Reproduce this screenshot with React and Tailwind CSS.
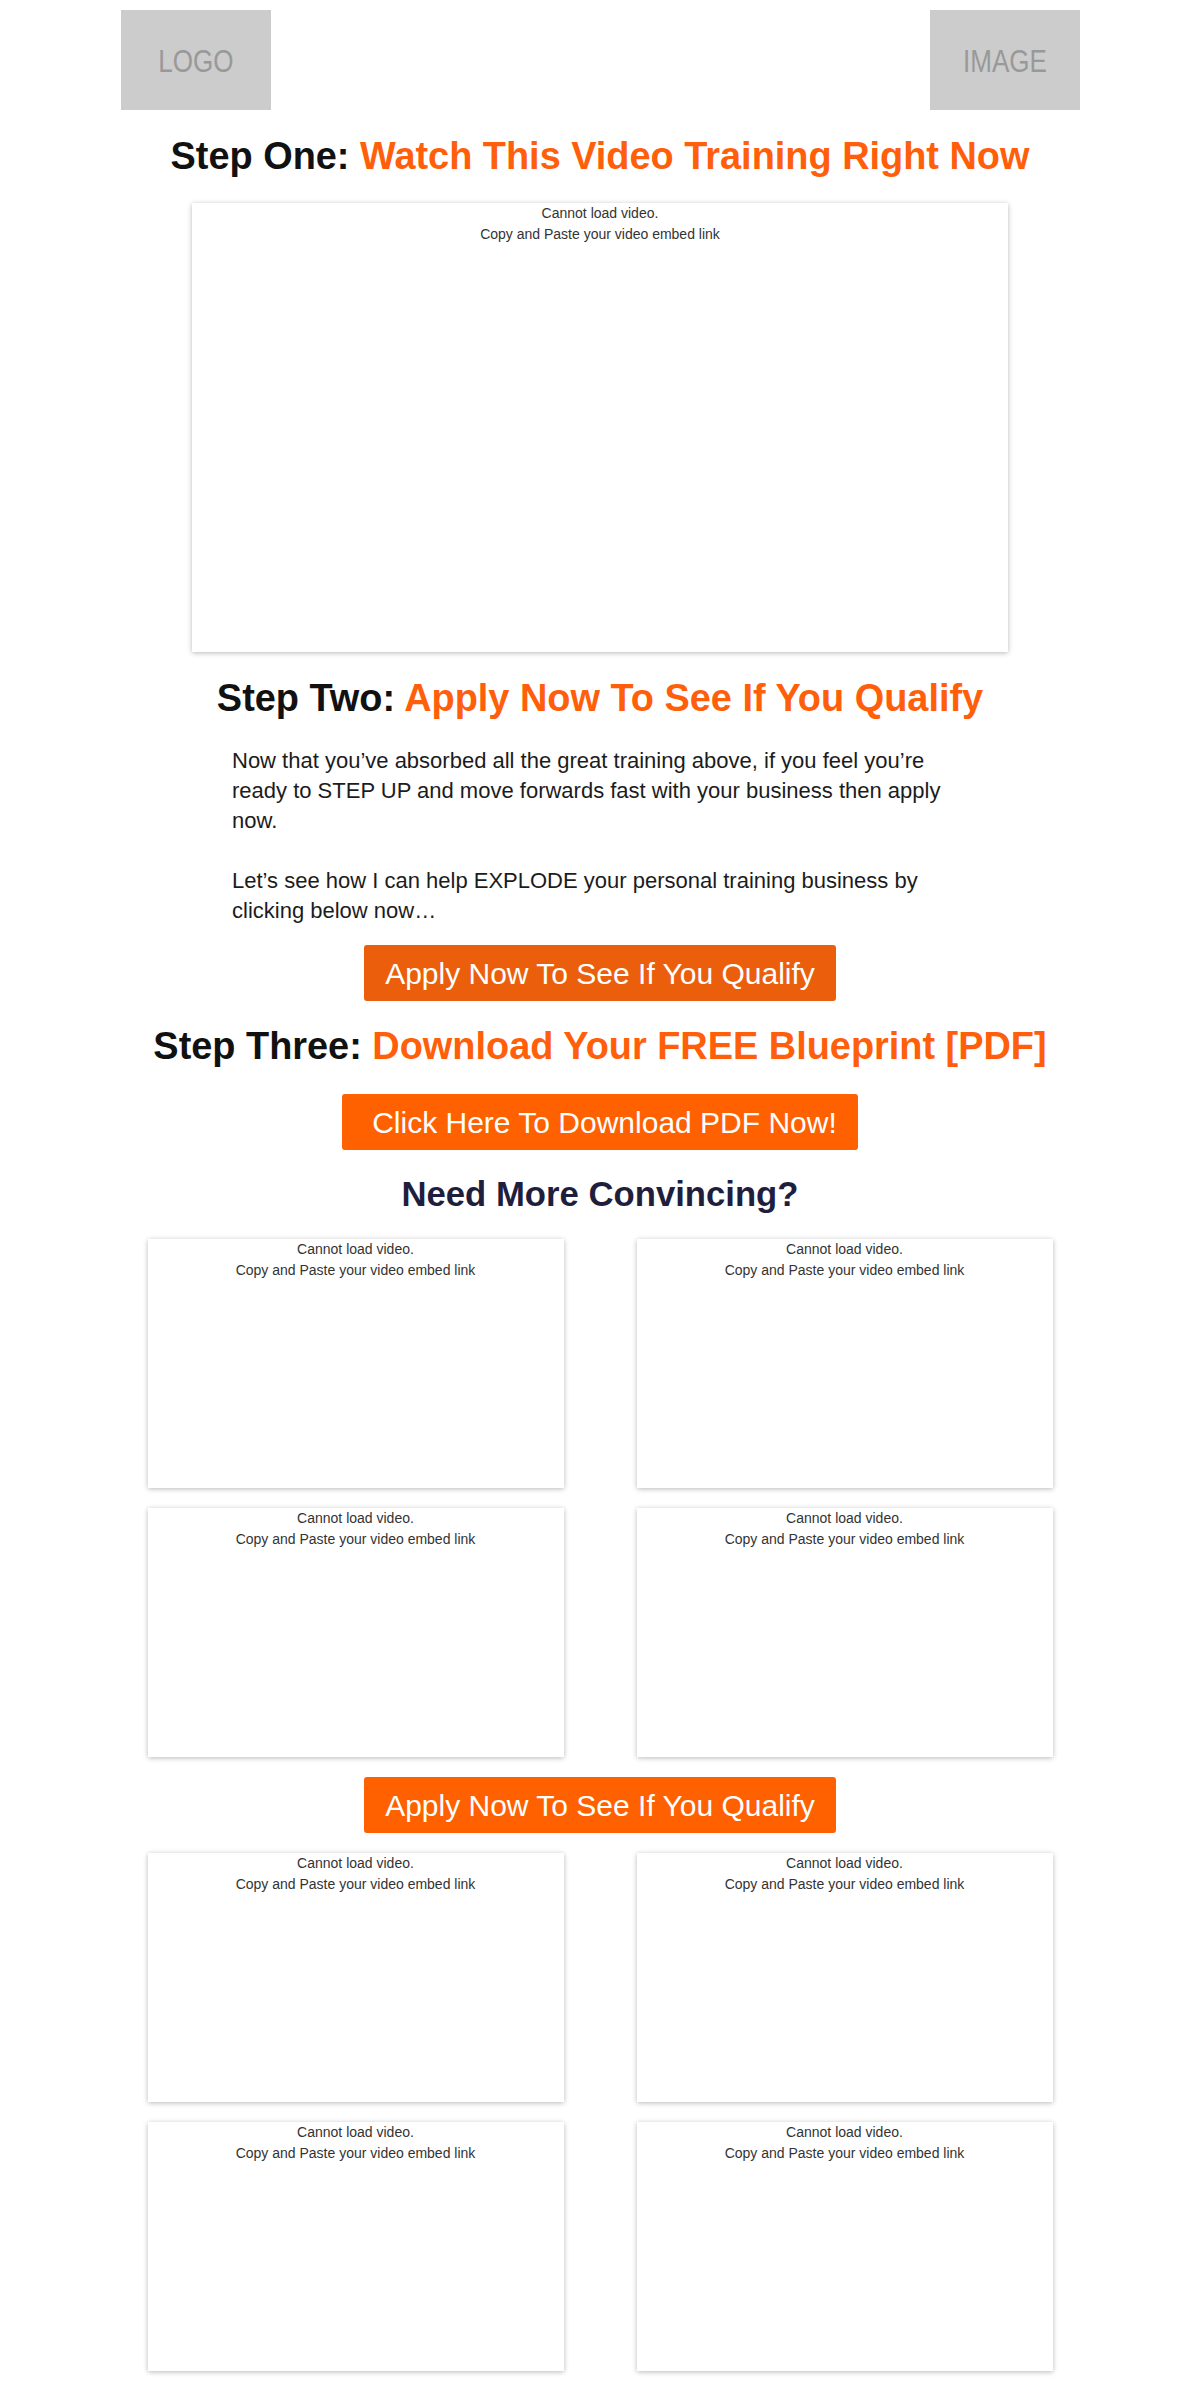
import React from "react";

function Video({ big }) {
  return (
    <div
      className={
        (big ? "w-[816px] h-[449px] mx-auto " : "w-[416px] h-[249px] ") +
        "bg-white shadow-[0_1px_5px_rgba(0,0,0,0.28)] text-center text-[14px] leading-[21px] text-[#333]"
      }
    >
      <div>Cannot load video.</div>
      <div>Copy and Paste your video embed link</div>
    </div>
  );
}

function Grid() {
  return (
    <div className="w-[905px] mx-auto grid grid-cols-[416px_416px] justify-between gap-y-[20px]">
      <Video />
      <Video />
      <Video />
      <Video />
    </div>
  );
}

function Placeholder({ label }) {
  return (
    <div className="w-[150px] h-[100px] bg-[#cccccc] flex items-center justify-center pt-[5px]">
      <span className="inline-block scale-x-[0.84] text-[31px] text-[#999999]">{label}</span>
    </div>
  );
}

export default function App() {
  return (
    <div
      className="w-[1200px] bg-white pt-[10px] pb-[10px]"
      style={{ fontFamily: '"Liberation Sans", Arial, sans-serif' }}
    >
      <div className="w-[959px] mx-auto flex justify-between">
        <Placeholder label="LOGO" />
        <Placeholder label="IMAGE" />
      </div>

      <h1 className="mt-[24px] text-center text-[37.9px] leading-[45px] font-bold text-[#111]">
        Step One: <span className="text-[#ff5f0a]">Watch This Video Training Right Now</span>
      </h1>

      <div className="mt-[24px]">
        <Video big />
      </div>

      <h2 className="mt-[24px] text-center text-[37.9px] leading-[45px] font-bold text-[#111]">
        Step Two: <span className="text-[#ff5f0a]">Apply Now To See If You Qualify</span>
      </h2>

      <div className="mt-[25px] w-[736px] mx-auto text-[22px] leading-[30px] text-[#1c1c1c]">
        <p>
          Now that you’ve absorbed all the great training above, if you feel you’re ready to STEP UP and move
          forwards fast with your business then apply now.
        </p>
        <p className="mt-[30px]">
          Let’s see how I can help EXPLODE your personal training business by clicking below now…
        </p>
      </div>

      <div className="mt-[19px] flex justify-center">
        <a className="h-[56px] px-[21px] flex items-center rounded-[3px] bg-[#eb5f0c] text-white text-[30px]">
          Apply Now To See If You Qualify
        </a>
      </div>

      <h2 className="mt-[23px] text-center text-[37.9px] leading-[45px] font-bold text-[#111]">
        Step Three: <span className="text-[#ff5f0a]">Download Your FREE Blueprint [PDF]</span>
      </h2>

      <div className="mt-[25px] flex justify-center">
        <a className="h-[56px] pl-[30px] pr-[21px] flex items-center rounded-[3px] bg-[#ff6100] text-white text-[30px]">
          Click Here To Download PDF Now!
        </a>
      </div>

      <h2 className="mt-[23px] text-center text-[34.7px] leading-[42px] font-bold text-[#1f1e3d]">
        Need More Convincing?
      </h2>

      <div className="mt-[24px]">
        <Grid />
      </div>

      <div className="mt-[20px] flex justify-center">
        <a className="h-[56px] px-[21px] flex items-center rounded-[3px] bg-[#ff6100] text-white text-[30px]">
          Apply Now To See If You Qualify
        </a>
      </div>

      <div className="mt-[20px]">
        <Grid />
      </div>
    </div>
  );
}
